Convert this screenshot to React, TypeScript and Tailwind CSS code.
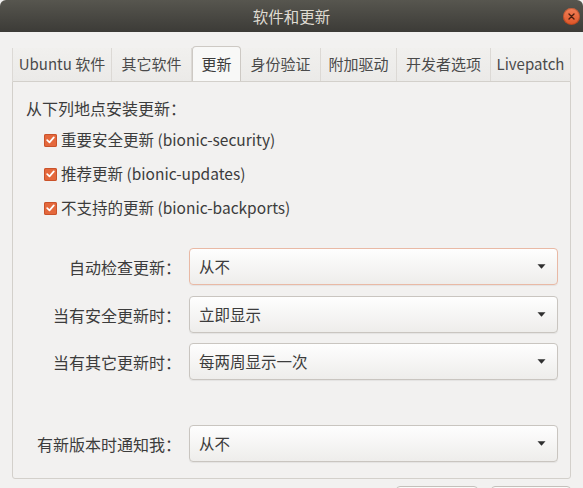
import React from 'react';

const tabs = [
  { label: 'Ubuntu 软件', w: 'w-[100px]' },
  { label: '其它软件', w: 'w-[80px]' },
  { label: '更新', w: 'w-[49px]', active: true },
  { label: '身份验证', w: 'w-[80px]' },
  { label: '附加驱动', w: 'w-[76px]' },
  { label: '开发者选项', w: 'w-[94px]' },
  { label: 'Livepatch', w: 'w-[80px]' },
];

const sources = [
  '重要安全更新 (bionic-security)',
  '推荐更新 (bionic-updates)',
  '不支持的更新 (bionic-backports)',
];

function CheckBox() {
  return (
    <span className="flex h-[13px] w-[13px] items-center justify-center rounded-[2px] bg-[#e4683c] shadow-[inset_0_0_0_1px_#c9522a]">
      <svg width="9" height="8" viewBox="0 0 9 8">
        <path d="M1.2 4.2 L3.5 6.4 L7.8 1.4" fill="none" stroke="#fff" strokeWidth="1.7" strokeLinecap="round" strokeLinejoin="round" />
      </svg>
    </span>
  );
}

function Combo({ label, value, focused, className }: { label: string; value: string; focused?: boolean; className?: string }) {
  return (
    <div className={`flex items-center ${className ?? ''}`}>
      <div className="w-[155px] shrink-0 text-right text-[16px]">{label}</div>
      <div
        className={`ml-[8px] flex h-[37px] w-[369px] items-center justify-between rounded-[4px] border bg-gradient-to-b from-[#fefefe] to-[#eeedeb] pl-[9px] pr-[9px] text-[15.5px] shadow-[0_1px_1px_rgba(0,0,0,0.06)] ${
          focused ? 'border-[#e9b9a5]' : 'border-[#c9c5c0]'
        }`}
      >
        <span>{value}</span>
        <svg width="9" height="5" viewBox="0 0 9 5" className="mr-[2px]">
          <path d="M0.5 0.3 H8.5 L4.5 4.7 Z" fill="#2f2f2f" />
        </svg>
      </div>
    </div>
  );
}

export default function App() {
  return (
    <div
      className="relative h-[488px] w-[583px] overflow-hidden bg-white text-[15px] text-[#3c3c3c]"
      style={{ fontFamily: '"Noto Sans CJK SC", "Noto Sans", sans-serif' }}
    >
      <div className="flex h-full flex-col bg-[#f2f1f0]">
        {/* title bar */}
        <div className="relative flex h-[32px] shrink-0 items-center justify-center rounded-t-[6px] bg-gradient-to-b from-[#57564f] to-[#3c3b37] text-[15.5px] text-[#dfdbd2]">
          <span className="pt-[1px]">软件和更新</span>
          <span className="absolute left-[563px] top-[8px] flex h-[17px] w-[17px] items-center justify-center rounded-full bg-gradient-to-b from-[#f28058] to-[#dd5425] shadow-[inset_0_0_0_1px_rgba(120,40,10,0.35)]">
            <svg width="7" height="7" viewBox="0 0 7 7">
              <path d="M1 1 L6 6 M6 1 L1 6" stroke="#4a1e0f" strokeWidth="1.4" strokeLinecap="round" />
            </svg>
          </span>
        </div>

        <div className="flex flex-col px-[12px]">
          {/* tabs */}
          <div className="mt-[14px] flex h-[35px] items-end">
            {tabs.map((t) =>
              t.active ? (
                <div
                  key={t.label}
                  className={`${t.w} -mb-[1px] flex h-[36px] items-center justify-center rounded-t-[4px] border border-b-0 border-[#cdc9c4] bg-[#f8f8f7] pb-[1px] text-[#3c3c3c]`}
                >
                  {t.label}
                </div>
              ) : (
                <div
                  key={t.label}
                  className={`${t.w} flex h-[33px] items-center justify-center border-r border-[#dcd9d5] bg-gradient-to-b from-[#f1f0ee] to-[#ebeae8] text-[#4a4a4a] first:border-l`}
                >
                  {t.label}
                </div>
              )
            )}
          </div>

          {/* panel */}
          <div className="flex h-[398px] flex-col rounded-b-[3px] border border-[#d3d0cb] bg-[#f2f1f0] pl-[13px]">
            <div className="mt-[15px] text-[16px] leading-[22px]">从下列地点安装更新：</div>
            <div className="mt-[4px] flex flex-col text-[15.5px]">
              {sources.map((s) => (
                <div key={s} className="flex h-[34px] items-center pl-[18px]">
                  <CheckBox />
                  <span className="ml-[4px]">{s}</span>
                </div>
              ))}
            </div>

            <Combo className="mt-[23px]" label="自动检查更新：" value="从不" focused />
            <Combo className="mt-[11px]" label="当有安全更新时：" value="立即显示" />
            <Combo className="mt-[10px]" label="当有其它更新时：" value="每两周显示一次" />
            <Combo className="mt-[45px]" label="有新版本时通知我：" value="从不" />
          </div>

          {/* bottom buttons, cut off by the window */}
          <div className="mt-[7px] flex justify-end gap-[13px]">
            <div className="h-[30px] w-[82px] rounded-[4px] border border-[#c4c0bb] bg-gradient-to-b from-[#fbfbfa] to-[#ecebe9]" />
            <div className="h-[30px] w-[80px] rounded-[4px] border border-[#c4c0bb] bg-gradient-to-b from-[#fbfbfa] to-[#ecebe9]" />
          </div>
        </div>
      </div>
    </div>
  );
}
